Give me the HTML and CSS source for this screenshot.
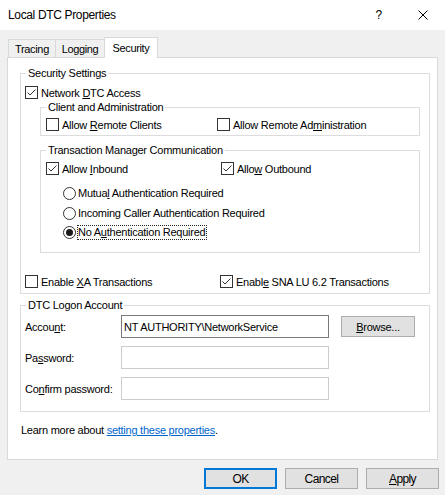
FILE: index.html
```html
<!DOCTYPE html>
<html>
<head>
<meta charset="utf-8">
<title>Local DTC Properties</title>
<link rel="stylesheet" href="styles.css">
</head>
<body>
<div class="titlebar">
  <span class="title">Local DTC Properties</span>
  <span class="help">?</span>
  <svg class="close" width="10" height="10" viewBox="0 0 10 10"><path d="M0.5 0.5L9.5 9.5M9.5 0.5L0.5 9.5" stroke="#000" stroke-width="1" fill="none"/></svg>
</div>
<div class="tabs">
  <div class="tab tab-first">Tracing</div>
  <div class="tab tab-second">Logging</div>
  <div class="tab tab-active">Security</div>
</div>
<div class="panel">
  <fieldset class="group g-security">
    <legend>Security Settings</legend>
    <div class="row">
      <label class="opt"><span class="cb"><svg viewBox="0 0 11 11"><path d="M1.5 5.5L4 8L9.5 2.5" fill="none" stroke="#333" stroke-width="1"/></svg></span><span>Network <u>D</u>TC Access</span></label>
    </div>
    <fieldset class="group sub g-client">
      <legend>Client and Administration</legend>
      <div class="row">
        <label class="opt col-client"><span class="cb"></span><span>Allow <u>R</u>emote Clients</span></label>
        <label class="opt"><span class="cb"></span><span>Allow Remote Ad<u>m</u>inistration</span></label>
      </div>
    </fieldset>
    <fieldset class="group sub g-trans">
      <legend>Transaction Manager Communication</legend>
      <div class="row">
        <label class="opt col-trans"><span class="cb"><svg viewBox="0 0 11 11"><path d="M1.5 5.5L4 8L9.5 2.5" fill="none" stroke="#333" stroke-width="1"/></svg></span><span>Allow <u>I</u>nbound</span></label>
        <label class="opt"><span class="cb"><svg viewBox="0 0 11 11"><path d="M1.5 5.5L4 8L9.5 2.5" fill="none" stroke="#333" stroke-width="1"/></svg></span><span>Allo<u>w</u> Outbound</span></label>
      </div>
      <div class="radios">
        <label class="rrow"><span class="rb"></span><span class="rtext">Mutua<u>l</u> Authentication Required</span></label>
        <label class="rrow"><span class="rb"></span><span class="rtext">Incomin<u>g</u> Caller Authentication Required</span></label>
        <label class="rrow rrow-last"><span class="rb rb-on"><span class="dot"></span></span><span class="rtext focus">No A<u>u</u>thentication Required</span></label>
      </div>
    </fieldset>
    <div class="row row-xa">
      <label class="opt col-xa"><span class="cb"></span><span>Enable <u>X</u>A Transactions</span></label>
      <label class="opt"><span class="cb"><svg viewBox="0 0 11 11"><path d="M1.5 5.5L4 8L9.5 2.5" fill="none" stroke="#333" stroke-width="1"/></svg></span><span>Enabl<u>e</u> SNA LU 6.2 Transactions</span></label>
    </div>
  </fieldset>
  <fieldset class="group g-logon">
    <legend>DTC Logon Account</legend>
    <div class="frow">
      <span class="flabel">Accou<u>n</u>t:</span>
      <span class="field"><span>NT AUTHORITY\NetworkService</span></span>
      <span class="browse"><span><u>B</u>rowse...</span></span>
    </div>
    <div class="frow">
      <span class="flabel">Pa<u>s</u>sword:</span>
      <span class="field field-off"></span>
    </div>
    <div class="frow">
      <span class="flabel">Co<u>n</u>firm password:</span>
      <span class="field field-off"></span>
    </div>
  </fieldset>
  <div class="learn">Learn more about <a class="link">setting these properties</a>.</div>
</div>
<div class="buttons">
  <span class="btn btn-default">OK</span>
  <span class="btn">Cancel</span>
  <span class="btn"><span><u>A</u>pply</span></span>
</div>
</body>
</html>
```
FILE: styles.css
```css
* { box-sizing: border-box; }
html, body { margin: 0; padding: 0; }
body {
  width: 445px;
  height: 495px;
  overflow: hidden;
  background: #f0f0f0;
  font-family: "Liberation Sans", Arial, sans-serif;
  font-size: 11px;
  letter-spacing: -0.25px;
  color: #000;
}
u { text-decoration: underline; text-underline-offset: 1px; }

.titlebar {
  height: 30px;
  background: #fff;
  display: flex;
  align-items: center;
  padding-left: 8px;
}
.title { flex: 1; font-size: 12px; letter-spacing: -0.35px; }
.help { font-size: 12px; margin-right: 36px; }
.close { margin-right: 17px; display: block; }

.tabs {
  display: flex;
  align-items: flex-end;
  height: 20px;
  margin-top: 7px;
  padding-left: 8px;
  position: relative;
  z-index: 1;
}
.tab {
  height: 18px;
  border: 1px solid #d9d9d9;
  border-bottom: none;
  background: #f0f0f0;
  display: flex;
  align-items: center;
  justify-content: center;
  letter-spacing: -0.35px;
  padding-top: 1px;
}
.tab-first { width: 48px; }
.tab-second { width: 48px; border-left: none; border-right: none; }
.tab-active { width: 54px; height: 21px; margin-bottom: -1px; background: #fff; padding-top: 0; padding-bottom: 1px; }

.panel {
  margin-left: 7px;
  width: 431px;
  height: 403px;
  background: #fff;
  border: 1px solid #d9d9d9;
  padding: 0 7px 0 12px;
}

fieldset.group {
  margin: 0;
  border: 1px solid #dcdcdc;
  padding: 0 4px;
  min-width: 0;
}
fieldset.group > legend {
  padding: 0 2px;
  margin-left: 1px;
  height: 13px;
  line-height: 13px;
}
fieldset.g-security { margin-top: 9px; padding-top: 4px; padding-bottom: 3px; }
fieldset.sub { margin: 0 5px 0 15px; padding: 0 5px; }
fieldset.sub > legend { margin-left: 0; }
fieldset.g-client { padding-top: 2px; padding-bottom: 2px; }
fieldset.g-trans { margin-top: 8px; padding-top: 3px; padding-bottom: 10px; }

.row { display: flex; align-items: center; height: 17px; }
.opt { display: flex; align-items: center; white-space: nowrap; }
.col-client { width: 171px; }
.col-trans { width: 175px; }
.col-xa { width: 195px; }
.row-xa { margin-top: 20px; }

.cb {
  width: 13px;
  height: 13px;
  border: 1px solid #333;
  background: #fff;
  margin-right: 3px;
  flex: none;
  display: block;
}
.cb svg { display: block; width: 11px; height: 11px; }

.radios { margin-top: 6px; margin-left: 17px; }
.rrow { display: flex; align-items: center; height: 20px; white-space: nowrap; }
.rrow-last { height: 19px; }
.rb {
  width: 13px;
  height: 13px;
  border: 1px solid #333;
  border-radius: 50%;
  background: #fff;
  margin-right: 1px;
  flex: none;
  display: flex;
  align-items: center;
  justify-content: center;
}
.dot { width: 7px; height: 7px; border-radius: 50%; background: #1a1a1a; display: block; }
.rtext { border: 1px solid transparent; line-height: 13px; padding-right: 1px; }
.rtext.focus { border: 1px dotted #222; }

fieldset.g-logon { margin-top: 5px; padding-top: 3px; padding-bottom: 11px; }
.frow { display: flex; align-items: center; height: 23px; }
.frow + .frow { margin-top: 8px; }
.flabel { width: 96px; flex: none; }
.field {
  width: 208px;
  height: 23px;
  border: 1px solid #7a7a7a;
  background: #fff;
  padding-left: 2px;
  display: flex;
  align-items: center;
  flex: none;
  white-space: nowrap;
}
.field-off { border-color: #cccccc; }
.browse {
  margin-left: 12px;
  width: 74px;
  height: 21px;
  border: 1px solid #adadad;
  background: #e1e1e1;
  display: flex;
  align-items: center;
  justify-content: center;
}

.learn { margin-top: 11px; line-height: 15px; padding-left: 1px; }
.link { color: #0066cc; text-decoration: underline; }

.buttons {
  display: flex;
  justify-content: flex-end;
  gap: 8px;
  margin-top: 8px;
  padding-right: 6px;
}
.btn {
  width: 73px;
  height: 21px;
  border: 1px solid #adadad;
  background: #e1e1e1;
  display: flex;
  align-items: center;
  justify-content: center;
  font-size: 12px;
  letter-spacing: -0.6px;
}
.btn-default { border: 2px solid #0078d7; }
```
